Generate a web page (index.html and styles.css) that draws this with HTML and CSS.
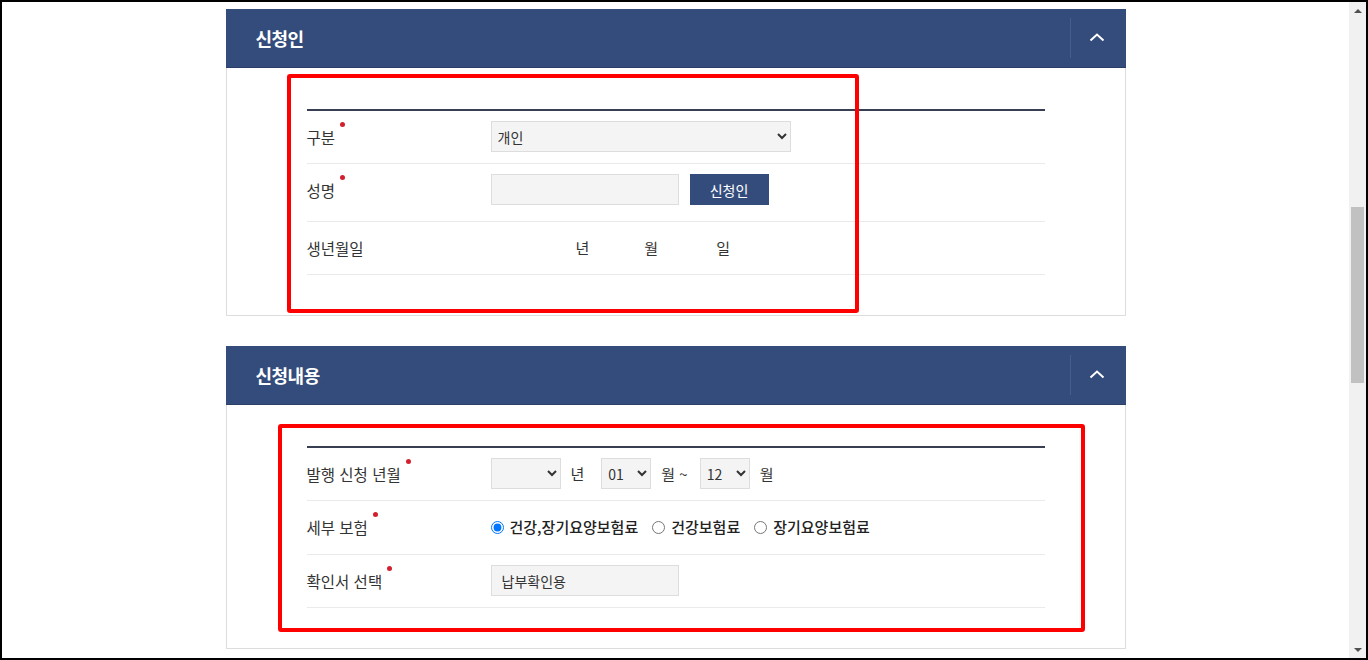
FILE: index.html
```html
<!DOCTYPE html>
<html lang="ko">
<head>
    <meta charset="UTF-8">
    <meta name="viewport" content="width=device-width, initial-scale=1.0">
    <title>납부확인서 신청</title>
    <link rel="stylesheet" href="styles.css">
</head>
<body>
    <div class="screen">
        <div class="page">
            <section class="panel">
                <div class="panel-head">
                    <h2>신청인</h2>
                    <div class="toggle">
                        <svg width="16" height="10" viewBox="0 0 16 10"><polyline points="1.5,8.5 8,2.5 14.5,8.5" fill="none" stroke="#fff" stroke-width="2"/></svg>
                    </div>
                </div>
                <div class="panel-body">
                    <div class="form-table">
                        <div class="form-row">
                            <div class="label"><span>구분</span><i class="req"></i></div>
                            <div class="field">
                                <select class="sel sel-wide"><option>개인</option></select>
                            </div>
                        </div>
                        <div class="form-row row-name">
                            <div class="label"><span>성명</span><i class="req"></i></div>
                            <div class="field">
                                <input type="text" class="txt txt-name">
                                <button class="btn">신청인</button>
                            </div>
                        </div>
                        <div class="form-row">
                            <div class="label"><span>생년월일</span></div>
                            <div class="field birth">
                                <span class="unit unit-y">년</span>
                                <span class="unit unit-m">월</span>
                                <span class="unit unit-d">일</span>
                            </div>
                        </div>
                    </div>
                </div>
            </section>

            <section class="panel">
                <div class="panel-head">
                    <h2>신청내용</h2>
                    <div class="toggle">
                        <svg width="16" height="10" viewBox="0 0 16 10"><polyline points="1.5,8.5 8,2.5 14.5,8.5" fill="none" stroke="#fff" stroke-width="2"/></svg>
                    </div>
                </div>
                <div class="panel-body">
                    <div class="form-table">
                        <div class="form-row">
                            <div class="label"><span>발행 신청 년월</span><i class="req"></i></div>
                            <div class="field period">
                                <select class="sel sel-year"><option></option></select>
                                <span class="unit">년</span>
                                <select class="sel sel-month"><option>01</option></select>
                                <span class="unit">월 ~</span>
                                <select class="sel sel-month"><option>12</option></select>
                                <span class="unit">월</span>
                            </div>
                        </div>
                        <div class="form-row row-radio">
                            <div class="label"><span>세부 보험</span><i class="req"></i></div>
                            <div class="field radios">
                                <label class="radio"><input type="radio" name="ins" checked>건강,장기요양보험료</label>
                                <label class="radio"><input type="radio" name="ins">건강보험료</label>
                                <label class="radio"><input type="radio" name="ins">장기요양보험료</label>
                            </div>
                        </div>
                        <div class="form-row">
                            <div class="label"><span>확인서 선택</span><i class="req"></i></div>
                            <div class="field">
                                <input type="text" class="txt txt-name" value="납부확인용" readonly>
                            </div>
                        </div>
                    </div>
                </div>
            </section>
        </div>

        <div class="scrollbar">
            <div class="arrow arrow-up"></div>
            <div class="track"><div class="thumb"></div></div>
            <div class="arrow arrow-down"></div>
        </div>

        <div class="mark mark-1"></div>
        <div class="mark mark-2"></div>
    </div>
</body>
</html>
```

FILE: styles.css
```css
* {
    box-sizing: border-box;
}
body {
    margin: 0;
    font-family: "Noto Sans CJK KR", "Noto Sans", sans-serif;
    color: #333;
    background: #fff;
}
.screen {
    position: relative;
    width: 1368px;
    height: 660px;
    border: 2px solid #000;
    display: flex;
    overflow: hidden;
}
.page {
    flex: 1;
    padding-top: 7px;
}
.panel {
    width: 900px;
    margin: 0 auto 30px;
}
.panel-head {
    height: 59px;
    background: #344c7b;
    border-bottom: 1px solid #2b3f68;
    display: flex;
    align-items: center;
    justify-content: space-between;
    padding-left: 30px;
}
.panel-head h2 {
    margin: 0;
    color: #fff;
    font-size: 18px;
    font-weight: 700;
    line-height: 1;
    letter-spacing: -0.5px;
}
.toggle {
    width: 56px;
    height: 40px;
    border-left: 1px solid #475e8a;
    display: flex;
    align-items: center;
    justify-content: center;
    padding: 0 2px 2px 0;
}
.panel-body {
    border: 1px solid #ddd;
    border-top: none;
    padding: 41px 80px 40px;
}
.form-table {
    border-top: 2px solid #383f52;
}
.form-row {
    display: flex;
    align-items: center;
    min-height: 53px;
    padding: 10px 0 11px;
    border-bottom: 1px solid #eaeaea;
}
.row-name {
    padding-bottom: 16px;
}
.row-radio {
    min-height: 54px;
}
.label {
    width: 184px;
    display: flex;
    align-items: flex-start;
    font-size: 15.5px;
    line-height: 20px;
    color: #333;
}
.req {
    display: inline-block;
    width: 5px;
    height: 5px;
    border-radius: 50%;
    background: #d3202e;
    margin: -5px 0 0 5px;
}
.field {
    display: flex;
    align-items: center;
    font-size: 15px;
    line-height: 20px;
}
.sel {
    height: 31px;
    border: 1px solid #ddd;
    background: #f4f4f4;
    font-family: inherit;
    font-size: 14px;
    color: #333;
    padding: 0 2px;
    border-radius: 0;
}
.sel-wide {
    width: 300px;
}
.sel-year {
    width: 70px;
}
.sel-month {
    width: 50px;
}
.txt {
    height: 31px;
    border: 1px solid #ddd;
    background: #f4f4f4;
    font-family: inherit;
    font-size: 14px;
    color: #333;
    padding: 0 10px;
    outline: none;
}
.txt-name {
    width: 188px;
}
.btn {
    margin-left: 11px;
    width: 79px;
    height: 31px;
    border: none;
    background: #344c7b;
    color: #fff;
    font-family: inherit;
    font-size: 14px;
    cursor: pointer;
}
.birth .unit-y {
    margin-left: 85px;
}
.birth .unit-m {
    margin-left: 55px;
}
.birth .unit-d {
    margin-left: 58px;
}
.period .unit {
    margin: 0 12px 0 10px;
}
.period .unit:first-of-type {
    margin-right: 17px;
}
.radios {
    gap: 14px;
}
.radio {
    display: flex;
    align-items: center;
    gap: 6px;
    color: #222;
    font-weight: 500;
}
.radio input {
    margin: 0;
    width: 13px;
    height: 13px;
}
.scrollbar {
    width: 17px;
    background: #f1f1f1;
    display: flex;
    flex-direction: column;
}
.arrow {
    height: 17px;
    display: flex;
    align-items: center;
    justify-content: center;
}
.arrow::before {
    content: "";
    border-left: 4px solid transparent;
    border-right: 4px solid transparent;
}
.arrow-up::before {
    border-bottom: 4px solid #505050;
}
.arrow-down::before {
    border-top: 4px solid #505050;
}
.track {
    flex: 1;
    padding-top: 188px;
}
.thumb {
    width: 13px;
    height: 176px;
    margin-left: 2px;
    background: #c1c1c1;
}
.mark {
    position: absolute;
    border: 4px solid #f00;
    border-radius: 3px;
}
.mark-1 {
    left: 285px;
    top: 72px;
    width: 572px;
    height: 239px;
}
.mark-2 {
    left: 276px;
    top: 422px;
    width: 807px;
    height: 208px;
}
```
